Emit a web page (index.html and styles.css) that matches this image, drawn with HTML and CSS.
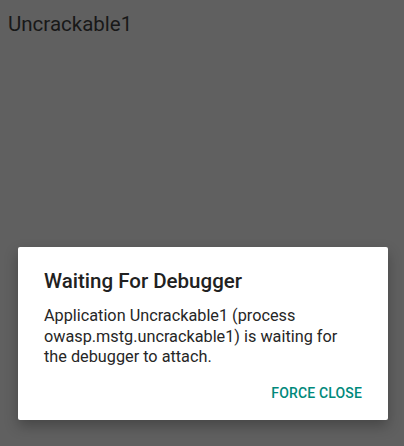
FILE: index.html
```html
<!DOCTYPE html>
<html>
<head>
<meta charset="utf-8">
<link rel="stylesheet" href="styles.css">
</head>
<body>
<div class="screen">
  <div class="appbar">Uncrackable1</div>
  <div class="spacer"></div>
  <div class="dialog">
    <div class="dialog-title">Waiting For Debugger</div>
    <div class="dialog-body">Application Uncrackable1 (process owasp.mstg.uncrackable1) is waiting for the debugger to attach.</div>
    <div class="dialog-actions"><span class="btn">FORCE CLOSE</span></div>
  </div>
</div>
</body>
</html>
```
FILE: styles.css
```css
html, body {
  margin: 0;
  padding: 0;
}
body {
  background: #606060;
  font-family: Roboto, "Noto Sans", sans-serif;
}
.screen {
  height: 446px;
  display: flex;
  flex-direction: column;
  padding: 0 16px 26px 18px;
  box-sizing: border-box;
}
.appbar {
  margin-left: -10px;
  padding-top: 11px;
  font-size: 20.5px;
  font-weight: 400;
  line-height: 26px;
  color: #181818;
}
.spacer {
  flex: 1;
}
.dialog {
  height: 173px;
  box-sizing: border-box;
  background: #ffffff;
  border-radius: 2px;
  box-shadow: 0 6px 14px rgba(0, 0, 0, 0.28);
  padding: 21px 26px 0 26px;
  display: flex;
  flex-direction: column;
}
.dialog-title {
  font-size: 20.5px;
  font-weight: 500;
  line-height: 26px;
  color: #212121;
}
.dialog-body {
  margin-top: 12px;
  font-size: 16.25px;
  line-height: 20.5px;
  color: #262626;
}
.dialog-actions {
  display: flex;
  justify-content: flex-end;
  margin-top: 17px;
}
.btn {
  font-size: 14px;
  line-height: 16px;
  font-weight: 500;
  color: #00897b;
  letter-spacing: 0.15px;
}
```
